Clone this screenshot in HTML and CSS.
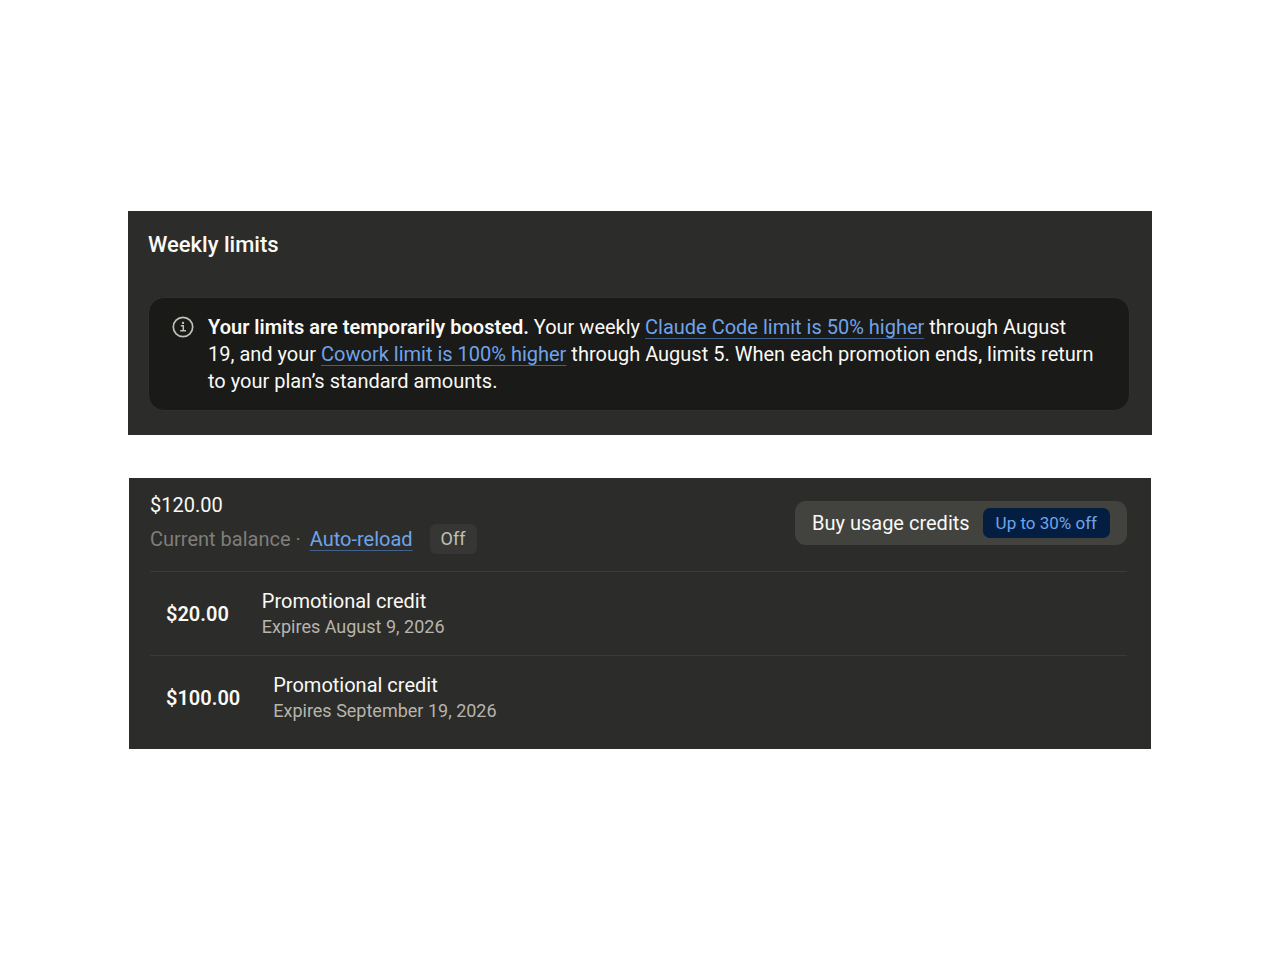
FILE: index.html
```html
<!DOCTYPE html>
<html lang="en">
<head>
    <meta charset="UTF-8">
    <meta name="viewport" content="width=device-width, initial-scale=1.0">
    <title>Usage</title>
    <link rel="stylesheet" href="styles.css">
</head>
<body>
    <section class="panel limits">
        <h2>Weekly limits</h2>
        <div class="notice">
            <svg class="notice-icon" viewBox="0 0 22 22" fill="none" stroke="currentColor" aria-hidden="true">
                <circle cx="11" cy="11" r="9.7" stroke-width="1.7"/>
                <path d="M8.8 9.8h2.5v5M8.2 14.8h5.8" stroke-width="1.5"/>
                <circle cx="11" cy="6.9" r="1.2" fill="currentColor" stroke="none"/>
            </svg>
            <p><strong>Your limits are temporarily boosted.</strong> Your weekly <a href="#">Claude Code limit is 50% higher</a> through August 19, and your <a href="#">Cowork limit is 100% higher</a> through August 5. When each promotion ends, limits return to your plan’s standard amounts.</p>
        </div>
    </section>

    <section class="panel credits">
        <header class="balance">
            <div class="balance-info">
                <div class="total">$120.00</div>
                <div class="balance-row">
                    <span class="muted">Current balance ·</span>
                    <a href="#">Auto-reload</a>
                    <span class="tag">Off</span>
                </div>
            </div>
            <button type="button" class="buy-btn">Buy usage credits <span class="promo">Up to 30% off</span></button>
        </header>
        <ul class="credit-list">
            <li>
                <span class="amount">$20.00</span>
                <div>
                    <div class="name">Promotional credit</div>
                    <div class="expires">Expires August 9, 2026</div>
                </div>
            </li>
            <li>
                <span class="amount">$100.00</span>
                <div>
                    <div class="name">Promotional credit</div>
                    <div class="expires">Expires September 19, 2026</div>
                </div>
            </li>
        </ul>
    </section>
</body>
</html>
```
FILE: styles.css
```css
* {
    box-sizing: border-box;
}
body {
    margin: 0;
    padding: 20px 10%;
    min-height: 100vh;
    display: flex;
    flex-direction: column;
    justify-content: center;
    gap: 43px;
    background: #fff;
    color: #faf9f5;
    font-family: Roboto, "Noto Sans", sans-serif;
    font-size: 20px;
    line-height: 25px;
}
h2, p, ul {
    margin: 0;
    padding: 0;
}
a {
    color: #6fa3ea;
    text-decoration: underline;
    text-decoration-color: #41608c;
    text-decoration-thickness: 1px;
    text-underline-offset: 4px;
    text-decoration-skip-ink: none;
}
.panel {
    background: #2c2c2a;
}
.limits {
    padding: 20px 22px 24px 20px;
}
.limits h2 {
    margin-bottom: 38px;
    font-size: 22px;
    font-weight: 500;
    line-height: 28px;
}
.notice {
    display: flex;
    gap: 14px;
    padding: 16px 33px 15px 23px;
    background: #1a1a18;
    border: 1px solid #30302e;
    border-radius: 16px;
    line-height: 27px;
}
.notice strong {
    font-weight: 600;
}
.notice-icon {
    flex-shrink: 0;
    width: 22px;
    height: 22px;
    margin-top: 2px;
    color: #c2c0b6;
}
.credits {
    margin: 0 1px;
    padding: 14px 24px 10px 21px;
}
.balance {
    display: flex;
    align-items: center;
    justify-content: space-between;
    padding-bottom: 17px;
}
.total {
    margin-bottom: 6px;
    line-height: 26px;
}
.balance-row {
    display: flex;
    align-items: center;
    gap: 9px;
    line-height: 30px;
}
.muted {
    color: #7f7e79;
}
.tag {
    margin-left: 8px;
    padding: 0 11px;
    background: #363634;
    border-radius: 6px;
    color: #c2c0b6;
    font-size: 18px;
}
.buy-btn {
    display: flex;
    align-items: center;
    gap: 13px;
    height: 44px;
    padding: 0 17px;
    background: #42423f;
    border: none;
    border-radius: 11px;
    color: #faf9f5;
    font: inherit;
    cursor: pointer;
}
.promo {
    padding: 0 13px;
    background: #041e42;
    border-radius: 7px;
    color: #6fa3ea;
    font-size: 17px;
    line-height: 30px;
}
.credit-list {
    list-style: none;
}
.credit-list li {
    display: flex;
    align-items: center;
    gap: 33px;
    padding: 17px 16px 16px;
    border-top: 1px solid #3a3a38;
}
.amount {
    font-weight: 600;
}
.expires {
    color: #b7b5ab;
    font-size: 18px;
}
```
